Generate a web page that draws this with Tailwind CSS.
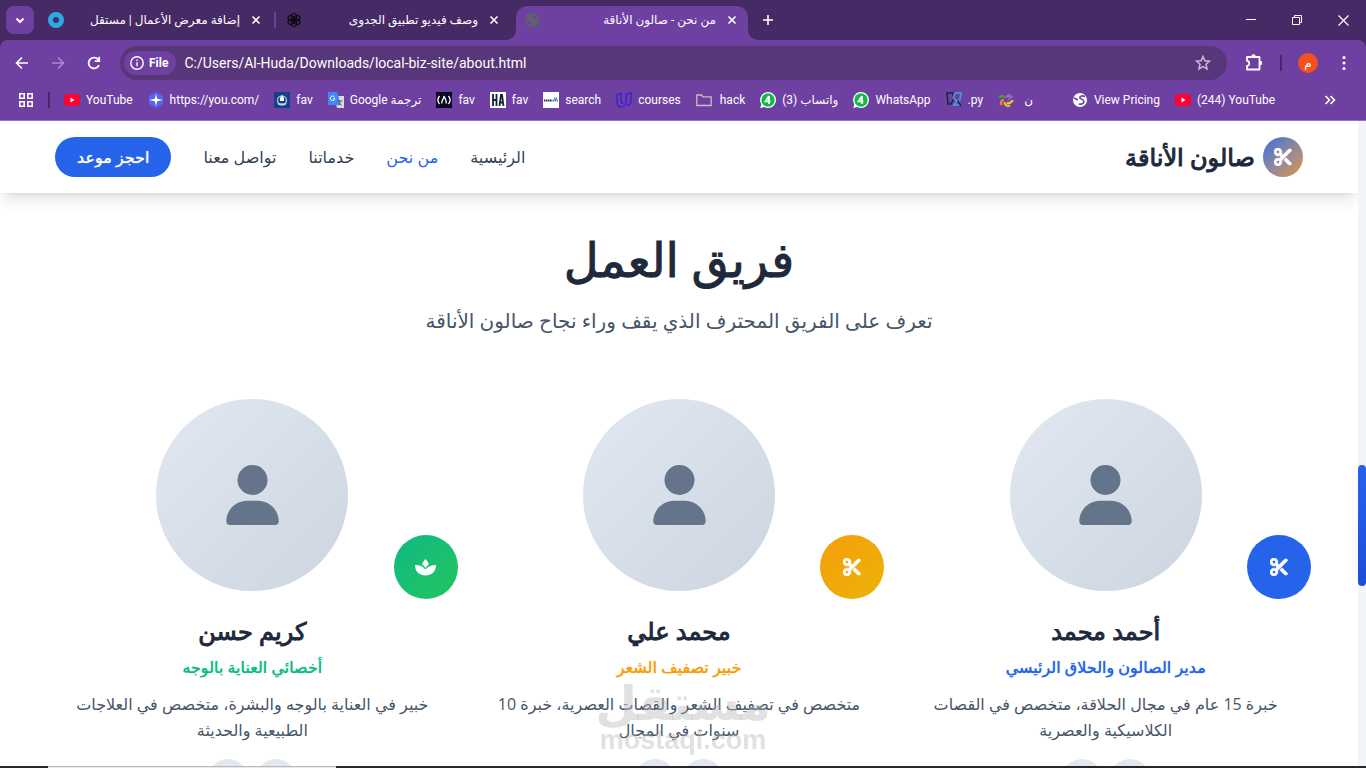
<!DOCTYPE html>
<html lang="ar">

<head>
    <meta charset="utf-8">
    <meta name="viewport" content="width=device-width, initial-scale=1">
    <title>من نحن - صالون الأناقة</title>
    <script src="https://cdn.jsdelivr.net/npm/@tailwindcss/browser@4"></script>
</head>

<body class="h-screen flex flex-col overflow-hidden bg-white font-['Roboto','DejaVu_Sans',sans-serif]">

<!-- shared icons -->
<svg class="hidden">
  <symbol id="scissors" viewBox="0 0 512 512"><path d="M256 192l-39.5-39.5c4.9-12.6 7.5-26.2 7.5-40.5C224 50.1 173.9 0 112 0S0 50.1 0 112s50.1 112 112 112c14.3 0 27.9-2.7 40.5-7.5L192 256l-39.5 39.5c-12.6-4.9-26.2-7.5-40.5-7.5C50.1 288 0 338.1 0 400s50.1 112 112 112s112-50.1 112-112c0-14.3-2.7-27.9-7.5-40.5L499.2 76.8c7.1-7.1 7.1-18.5 0-25.6c-28.3-28.3-74.1-28.3-102.4 0L256 192zm22.6 150.6L396.8 460.8c28.3 28.3 74.1 28.3 102.4 0c7.1-7.1 7.1-18.5 0-25.6L342.6 278.6l-64 64zM64 112a48 48 0 1 1 96 0 48 48 0 1 1 -96 0zm48 240a48 48 0 1 1 0 96 48 48 0 1 1 0-96z" stroke="#fff" stroke-width="20"/></symbol>
  <symbol id="user" viewBox="0 0 448 512"><path d="M224 256A128 128 0 1 0 224 0a128 128 0 1 0 0 256zm-45.7 48C79.8 304 0 383.8 0 482.3C0 498.7 13.3 512 29.7 512H418.3c16.4 0 29.7-13.3 29.7-29.7C448 383.8 368.2 304 269.7 304H178.3z"/></symbol>
  <symbol id="spa" viewBox="0 0 21 17"><path d="M10.500 0c1.800 1.800 3.300 4.500 3.300 5.500-1.400.9-2.400 2-3.300 3.600C9.600 7.500 8.600 6.400 7.200 5.500 7.200 4.500 8.700 1.800 10.500 0z"/><path d="M0 6c5 0 8.700 1.700 10.500 4.600C12.300 7.700 16 6 21 6c0 6-3.800 10.400-10.500 10.400S0 12 0 6z"/></symbol>
  <symbol id="close" viewBox="0 0 16 16"><path d="M4.500 4.500l7 7m0-7l-7 7" fill="none" stroke="#fff" stroke-width="1.600"/></symbol>
  <symbol id="yt" viewBox="0 0 16 16"><rect y="2" width="16" height="12" rx="3" fill="#ff0033"/><path d="M6.500 5.500v5L10.500 8z" fill="#fff"/></symbol>
  <symbol id="wa" viewBox="0 0 16 16"><path d="M8 0a8 8 0 0 1 0 16c-1.300 0-2.600-.3-3.700-.9L.3 16l1-3.800A8 8 0 0 1 8 0z" fill="#fff"/><circle cx="8" cy="8" r="6.700" fill="#12b948"/><path d="M9 4L5.500 9.300h5M9 4v8" fill="none" stroke="#fff" stroke-width="1.700"/></symbol>
</svg>

<!-- tab strip -->
<div class="h-10 shrink-0 bg-[#462a66] flex items-center text-xs text-white pl-[6px]">
  <button class="w-7 h-7 rounded-lg bg-[#6e40a1] flex items-center justify-center mr-[6px]" aria-label="Search tabs">
    <svg class="w-4 h-4" viewBox="0 0 16 16" fill="none" stroke="#fff" stroke-width="2"><path d="M4.500 6.500L8 10l3.500-3.500"/></svg>
  </button>
  <div class="w-[238px] flex items-center pl-2 pr-[14px]">
    <svg class="w-4 h-4" viewBox="0 0 16 16"><circle cx="8" cy="8" r="5.500" fill="none" stroke="#2caae2" stroke-width="5"/></svg>
    <span class="flex-1 text-right pr-2" dir="rtl">إضافة معرض الأعمال | مستقل</span>
    <button aria-label="Close tab"><svg class="w-4 h-4"><use href="#close"/></svg></button>
  </div>
  <div class="w-[238px] flex items-center pl-2 pr-[14px] relative">
    <span class="absolute -left-1 w-[2px] h-4 bg-[#6e40a1]"></span>
    <svg class="w-4 h-4" viewBox="0 0 16 16" fill="none" stroke="#0d0a12" stroke-width="1.200">
      <ellipse cx="8" cy="5" rx="2.600" ry="3.500"/><ellipse cx="8" cy="5" rx="2.600" ry="3.500" transform="rotate(60 8 8)"/><ellipse cx="8" cy="5" rx="2.600" ry="3.500" transform="rotate(120 8 8)"/><ellipse cx="8" cy="5" rx="2.600" ry="3.500" transform="rotate(180 8 8)"/><ellipse cx="8" cy="5" rx="2.600" ry="3.500" transform="rotate(240 8 8)"/><ellipse cx="8" cy="5" rx="2.600" ry="3.500" transform="rotate(300 8 8)"/>
    </svg>
    <span class="flex-1 text-right pr-2" dir="rtl">وصف فيديو تطبيق الجدوى</span>
    <button aria-label="Close tab"><svg class="w-4 h-4"><use href="#close"/></svg></button>
  </div>
  <div class="w-[232px] self-end h-[34px] rounded-t-xl bg-[#6e40a1] flex items-center pl-2 pr-2 pb-[6px] mr-[6px] relative">
    <svg class="absolute -left-[10px] bottom-0 w-[10px] h-[10px]" viewBox="0 0 10 10"><path d="M10 0v10H0A10 10 0 0 0 10 0z" fill="#6e40a1"/></svg>
    <svg class="absolute -right-[10px] bottom-0 w-[10px] h-[10px]" viewBox="0 0 10 10"><path d="M0 0v10h10A10 10 0 0 1 0 0z" fill="#6e40a1"/></svg>
    <svg class="w-4 h-4" viewBox="0 0 16 16"><circle cx="8" cy="8" r="7" fill="#5f6368"/><path d="M2 8c2-.5 3.500 0 4.500 1s0 2 .5 3.500c-3 0-5-1.500-5-4.500zM8.500 3c.5 1-1.500 1.500 0 2.500s2.500 0 4.500 2c.3-2.500-2-4.800-4.500-4.500z" fill="#6e40a1"/></svg>
    <span class="flex-1 text-right pr-2" dir="rtl">من نحن - صالون الأناقة</span>
    <button aria-label="Close tab"><svg class="w-4 h-4"><use href="#close"/></svg></button>
  </div>
  <button class="w-7 h-7 flex items-center justify-center" aria-label="New tab">
    <svg class="w-4 h-4" viewBox="0 0 16 16" stroke="#fff" stroke-width="1.600"><path d="M8 3v10M3 8h10"/></svg>
  </button>
  <div class="ml-auto flex">
    <button class="w-[46px] h-10 flex items-center justify-center" aria-label="Minimize"><svg class="w-[10px] h-[10px]" viewBox="0 0 10 10" stroke="#fff"><path d="M0 4.500h10"/></svg></button>
    <button class="w-[46px] h-10 flex items-center justify-center" aria-label="Restore"><svg class="w-[10px] h-[10px]" viewBox="0 0 10 10" fill="none" stroke="#fff"><path d="M.5 2.500h7v7h-7zM2.500 2.500v-2h7v7h-2"/></svg></button>
    <button class="w-[46px] h-10 flex items-center justify-center" aria-label="Close"><svg class="w-[11px] h-[11px]" viewBox="0 0 11 11" stroke="#fff" stroke-width="1.200"><path d="M.5.5l10 10m0-10l-10 10"/></svg></button>
  </div>
</div>

<!-- address bar -->
<div class="bg-[#462a66] shrink-0">
  <div class="h-[41px] rounded-t-lg bg-[#6e40a1] flex items-center pt-[5px] pl-[14px] pr-[14px] text-white">
    <button class="mr-5" aria-label="Back"><svg class="w-4 h-4" viewBox="0 0 16 16" fill="none" stroke="#fff" stroke-width="1.600"><path d="M14 8H3M8 2.500L2.500 8 8 13.500"/></svg></button>
    <button class="mr-5" aria-label="Forward"><svg class="w-4 h-4" viewBox="0 0 16 16" fill="none" stroke="#a98bc9" stroke-width="1.600"><path d="M2 8h11M8 2.500L13.500 8 8 13.500"/></svg></button>
    <button class="mr-[18px]" aria-label="Reload"><svg class="w-4 h-4" viewBox="0 0 16 16" fill="none" stroke="#fff" stroke-width="1.800"><path d="M13 10.200A5.400 5.400 0 1 1 12.500 5"/><path d="M13.200 1.800v4.400H8.800"/></svg></button>
    <div class="flex-1 h-[34px] rounded-full bg-[#573679] flex items-center pl-1 pr-4">
      <button class="h-6 rounded-full bg-[#6e40a1] flex items-center gap-1 pl-[5px] pr-2 text-xs font-bold">
        <svg class="w-4 h-4" viewBox="0 0 16 16" fill="none" stroke="#fff" stroke-width="1.400"><circle cx="8" cy="8" r="6.200"/><path d="M8 7.300v4M8 4.500v1.500"/></svg>
        File
      </button>
      <input type="text" aria-label="Address" value="C:/Users/Al-Huda/Downloads/local-biz-site/about.html" class="flex-1 ml-2 bg-transparent text-sm outline-none">
      <button aria-label="Bookmark"><svg class="w-4 h-4" viewBox="0 0 16 16" fill="none" stroke="#c9bcd6" stroke-width="1.500"><path d="M8 1.500l1.900 4.300 4.600.4-3.500 3.100 1.100 4.600L8 11.500l-4.100 2.400L5 9.300 1.500 6.200l4.600-.4z"/></svg></button>
    </div>
    <button class="ml-[17px] mr-4" aria-label="Extensions"><svg class="w-5 h-5" viewBox="0 0 20 20" fill="none" stroke="#fff" stroke-width="1.800"><path d="M3 4h12.500v12.500H3v-3.700c3 0 3-5 0-5z" stroke-linejoin="round"/><path d="M7.300 3.500a2.200 2.200 0 0 1 4.400 0zM16 7.800a2.200 2.200 0 0 1 0 4.400z" fill="#fff" stroke="none"/></svg></button>
    <span class="w-[2px] h-4 bg-[#462a66] mr-4"></span>
    <button class="w-5 h-5 rounded-full bg-[#f4511e] flex items-center justify-center text-xs mr-[18px]">م</button>
    <button aria-label="Menu"><svg class="w-4 h-4" viewBox="0 0 16 16" fill="#fff"><circle cx="8" cy="2.500" r="1.600"/><circle cx="8" cy="8" r="1.600"/><circle cx="8" cy="13.500" r="1.600"/></svg></button>
  </div>
</div>

<!-- bookmarks -->
<nav class="h-10 shrink-0 bg-[#6e40a1] border-b border-[#9a70c0] flex items-center gap-[15px] pl-[18px] pr-7 pb-px text-xs text-white whitespace-nowrap">
  <button aria-label="Apps"><svg class="w-4 h-4" viewBox="0 0 16 16" fill="none" stroke="#fff" stroke-width="1.600"><path d="M1.800 1.800h4.400v4.400H1.800zM9.800 1.800h4.400v4.400H9.800zM1.800 9.800h4.400v4.400H1.800zM9.800 9.800h4.400v4.400H9.800z"/></svg></button>
  <span class="w-[2px] h-4 bg-[#462a66] -ml-px -mr-px"></span>
  <a href="#" class="flex items-center gap-[6px]"><svg class="w-4 h-4"><use href="#yt"/></svg>YouTube</a>
  <a href="#" class="flex items-center gap-[6px]"><svg class="w-4 h-4" viewBox="0 0 16 16"><path d="M8 0l7 4v8l-7 4-7-4V4z" fill="#5566ee"/><path d="M8 2l1.200 4.800L15 8 9.200 9.200 8 14 6.800 9.200 1 8l5.800-1.200z" fill="#fff"/></svg>https://you.com/</a>
  <a href="#" class="flex items-center gap-[6px]"><svg class="w-4 h-4" viewBox="0 0 16 16"><rect width="16" height="16" fill="#173f85"/><circle cx="8" cy="8.500" r="4.500" fill="none" stroke="#9db7dd" stroke-width="1.500"/><path d="M8 3L6 6v3h4V6z" fill="#fff"/><path d="M4 12h8" stroke="#fff"/></svg>fav</a>
  <a href="#" class="flex items-center gap-[6px]"><svg class="w-4 h-4" viewBox="0 0 16 16"><path d="M6 4h10v12H9z" fill="#d9dbe0"/><path d="M0 0h9l4 13H0z" fill="#4386f5"/><path d="M6.500 5A2.300 2.300 0 1 0 6.900 6.800H5" fill="none" stroke="#fff"/><path d="M9.500 9h5M12 8v1c0 2-1 3.500-2 4.500m1-3c1 2 2 2.500 3 3" fill="none" stroke="#666"/></svg><span dir="rtl">ترجمة Google</span></a>
  <a href="#" class="flex items-center gap-[6px]"><svg class="w-4 h-4" viewBox="0 0 16 16"><rect width="16" height="16" fill="#0a0a23"/><path d="M3.500 4c-2 2.500-2 5.500 0 8M12.500 4c2 2.500 2 5.500 0 8M6 11.500c-1-3 2-4 2-7.500 1 3 3 4.500 2 7.500" fill="none" stroke="#fff" stroke-width="1.300"/></svg>fav</a>
  <a href="#" class="flex items-center gap-[6px]"><svg class="w-4 h-4" viewBox="0 0 16 16"><rect width="16" height="16" fill="#fff"/><path d="M3 2v12M6.500 2v12M3 8h3.500M9.500 14l1.500-11h1l1.500 11M10 10.500h3" fill="none" stroke="#14213a" stroke-width="1.800"/></svg>fav</a>
  <a href="#" class="flex items-center gap-[6px]"><svg class="w-4 h-4" viewBox="0 0 16 16"><rect width="16" height="16" fill="#fff"/><path d="M1 8.500h7" stroke="#333" stroke-width="2" stroke-dasharray="1.500 .5"/><path d="M8 8.500h7M11 6.500h3" stroke="#3a87c8" stroke-width="2" stroke-dasharray="1.500 .5"/></svg>search</a>
  <a href="#" class="flex items-center gap-[6px]"><svg class="w-4 h-4" viewBox="0 0 16 16" fill="none" stroke="#2a1be8" stroke-width="1.200"><path d="M5 1L1 3v7c0 3 2 5 4.500 5S10 13 10 10.500M5 1v8c0 1.500 1 2.500 2.500 2.500M10 2.500L15 .8V9c0 2.500-2 4-4 4.500M10 2.500v8"/></svg>courses</a>
  <a href="#" class="flex items-center gap-2"><svg class="w-4 h-4" viewBox="0 0 16 16" fill="none" stroke="#c6c0b6" stroke-width="1.300"><path d="M.8 3h4.700L7 4.800h8.200v8.700H.8z"/></svg>hack</a>
  <a href="#" class="flex items-center gap-[6px]"><svg class="w-4 h-4"><use href="#wa"/></svg><span dir="rtl">واتساب (3)</span></a>
  <a href="#" class="flex items-center gap-[6px]"><svg class="w-4 h-4"><use href="#wa"/></svg>WhatsApp</a>
  <a href="#" class="flex items-center gap-[6px]"><svg class="w-4 h-4" viewBox="0 0 16 16" fill="none" stroke-width="1.500"><path d="M7 1H1l1 11h3l2-4z" stroke="#1d2440"/><path d="M15 1H9L7 6l4 3-3 4h5z" stroke="#3fa2dc"/><path d="M12 9l3 5" stroke="#1d2440"/></svg>.py</a>
  <a href="#" class="flex items-center gap-[6px]"><svg class="w-4 h-4" viewBox="0 0 16 16" fill="none" stroke-width="2.400"><path d="M7 6C6 3.500 3 3 1.500 6" stroke="#3a9d4a"/><path d="M5.800 8C3 8 2 11 4 13" stroke="#e8872c"/><path d="M7 10c-1 2 2 5 5 3.500" stroke="#f0b52c"/><path d="M9 10.500c2 1.500 5 0 5.500-2.500" stroke="#f2c230"/><path d="M10.500 8c2-1.500 1.500-4-1-6" stroke="#3f7fd6"/><path d="M8.500 5.500c1-2.500 4-2 5.500 0" stroke="#c75a9a"/></svg><span class="pl-1 pr-4">ن</span></a>
  <a href="#" class="flex items-center gap-[6px] ml-2"><svg class="w-4 h-4" viewBox="0 0 16 16"><circle cx="8" cy="8" r="7" fill="#fff"/><path d="M13 4.500c-3-1.500-6 0-5 1.500s4 1.500 4 3.500-3 3-5 2.500M2 6l4 2" fill="none" stroke="#6e40a1" stroke-width="1.600"/></svg>View Pricing</a>
  <a href="#" class="flex items-center gap-[6px]"><svg class="w-4 h-4"><use href="#yt"/></svg>(244) YouTube</a>
  <button class="ml-auto" aria-label="More bookmarks"><svg class="w-4 h-4" viewBox="0 0 16 16" fill="none" stroke="#fff" stroke-width="1.600"><path d="M3.500 4l4 4-4 4M8.500 4l4 4-4 4"/></svg></button>
</nav>

<!-- page -->
<div class="flex-1 min-h-0 flex overflow-hidden font-['Open_Sans','DejaVu_Sans',sans-serif]">
  <div class="flex-1 min-w-0 overflow-hidden relative text-[#1e293b]" dir="rtl">
    <header class="bg-white shadow-lg relative">
      <div class="max-w-7xl mx-auto px-4 py-4 flex items-center justify-between">
        <a href="#" class="flex items-center gap-2">
          <span class="w-10 h-10 rounded-full bg-linear-to-br from-[#3568e0] to-[#e0922a] flex items-center justify-center"><svg class="w-[18px] h-[18px] fill-white overflow-visible"><use href="#scissors"/></svg></span>
          <span class="text-2xl [-webkit-text-stroke:1px]">صالون الأناقة</span>
        </a>
        <nav class="flex items-center gap-8 text-base text-[#334155]">
          <a href="#">الرئيسية</a>
          <a href="#" class="text-[#2563eb]">من نحن</a>
          <a href="#">خدماتنا</a>
          <a href="#">تواصل معنا</a>
          <button class="h-10 px-[22px] rounded-full bg-[#2563eb] text-white [text-shadow:0_0_1px_currentColor]">احجز موعد</button>
        </nav>
      </div>
    </header>

    <main class="max-w-7xl mx-auto px-4 pt-[42px] text-center">
      <h2 class="text-5xl leading-[48px] mb-[22px] [-webkit-text-stroke:1px]">فريق العمل</h2>
      <p class="text-xl leading-8 text-[#475569] mb-[62px]">تعرف على الفريق المحترف الذي يقف وراء نجاح صالون الأناقة</p>

      <div class="grid grid-cols-3 gap-8">
        <div>
          <div class="relative mb-6">
            <div class="w-48 h-48 mx-auto rounded-full bg-linear-to-br from-[#e2e8f0] to-[#cbd5e1] flex items-center justify-center"><svg class="w-[53px] h-[60px] fill-[#64748b]"><use href="#user"/></svg></div>
            <span class="absolute -bottom-2 -right-2 w-16 h-16 rounded-full bg-[#2563eb] flex items-center justify-center"><svg class="w-[18px] h-[18px] fill-white overflow-visible"><use href="#scissors"/></svg></span>
          </div>
          <h3 class="text-2xl mb-2 [-webkit-text-stroke:1px]">أحمد محمد</h3>
          <p class="text-[#2563eb] mb-3 [text-shadow:0_0_1px_currentColor]">مدير الصالون والحلاق الرئيسي</p>
          <p class="leading-[26px] text-[#475569] mb-4">خبرة 15 عام في مجال الحلاقة، متخصص في القصات<br>الكلاسيكية والعصرية</p>
          <div class="flex justify-center gap-2"><a href="#" aria-label="فيسبوك" class="w-10 h-10 rounded-full bg-[#e2e8f0]"></a><a href="#" aria-label="إنستغرام" class="w-10 h-10 rounded-full bg-[#e2e8f0]"></a></div>
        </div>
        <div>
          <div class="relative mb-6">
            <div class="w-48 h-48 mx-auto rounded-full bg-linear-to-br from-[#e2e8f0] to-[#cbd5e1] flex items-center justify-center"><svg class="w-[53px] h-[60px] fill-[#64748b]"><use href="#user"/></svg></div>
            <span class="absolute -bottom-2 -right-2 w-16 h-16 rounded-full bg-linear-to-br from-[#f59e0b] to-[#eab308] flex items-center justify-center"><svg class="w-[18px] h-[18px] fill-white overflow-visible"><use href="#scissors"/></svg></span>
          </div>
          <h3 class="text-2xl mb-2 [-webkit-text-stroke:1px]">محمد علي</h3>
          <p class="text-[#f59e0b] mb-3 [text-shadow:0_0_1px_currentColor]">خبير تصفيف الشعر</p>
          <p class="leading-[26px] text-[#475569] mb-4">متخصص في تصفيف الشعر والقصات العصرية، خبرة 10<br>سنوات في المجال</p>
          <div class="flex justify-center gap-2"><a href="#" aria-label="فيسبوك" class="w-10 h-10 rounded-full bg-[#e2e8f0]"></a><a href="#" aria-label="إنستغرام" class="w-10 h-10 rounded-full bg-[#e2e8f0]"></a></div>
        </div>
        <div>
          <div class="relative mb-6">
            <div class="w-48 h-48 mx-auto rounded-full bg-linear-to-br from-[#e2e8f0] to-[#cbd5e1] flex items-center justify-center"><svg class="w-[53px] h-[60px] fill-[#64748b]"><use href="#user"/></svg></div>
            <span class="absolute -bottom-2 -right-2 w-16 h-16 rounded-full bg-linear-to-br from-[#10b981] to-[#22c55e] flex items-center justify-center"><svg class="w-[21px] h-[17px] fill-white"><use href="#spa"/></svg></span>
          </div>
          <h3 class="text-2xl mb-2 [-webkit-text-stroke:1px]">كريم حسن</h3>
          <p class="text-[#10b981] mb-3 [text-shadow:0_0_1px_currentColor]">أخصائي العناية بالوجه</p>
          <p class="leading-[26px] text-[#475569] mb-4">خبير في العناية بالوجه والبشرة، متخصص في العلاجات<br>الطبيعية والحديثة</p>
          <div class="flex justify-center gap-2"><a href="#" aria-label="فيسبوك" class="w-10 h-10 rounded-full bg-[#e2e8f0]"></a><a href="#" aria-label="إنستغرام" class="w-10 h-10 rounded-full bg-[#e2e8f0]"></a></div>
        </div>
      </div>
    </main>
  </div>

  <!-- scrollbar -->
  <div class="w-2 bg-[#f1f5f9] flex flex-col">
    <div class="grow-[344]"></div>
    <div class="grow-[121] rounded-full bg-linear-to-b from-[#2563eb] to-[#1d4ed8]"></div>
    <div class="grow-[180]"></div>
  </div>
</div>

<!-- watermark -->
<div class="fixed inset-x-0 bottom-4 text-center font-bold text-[#b4b4b4]/40 pointer-events-none">
  <div class="text-5xl leading-[48px]" dir="rtl">مستقل</div>
  <div class="text-[27px] leading-6 font-['Liberation_Sans']">mostaql.com</div>
</div>

<!-- top edge of the taskbar -->
<div class="h-[2px] shrink-0 bg-[#28282c] flex">
  <span class="w-72 ml-12 bg-[#e8e8e8] border-t border-[#bbb]"></span>
</div>

</body>

</html>
